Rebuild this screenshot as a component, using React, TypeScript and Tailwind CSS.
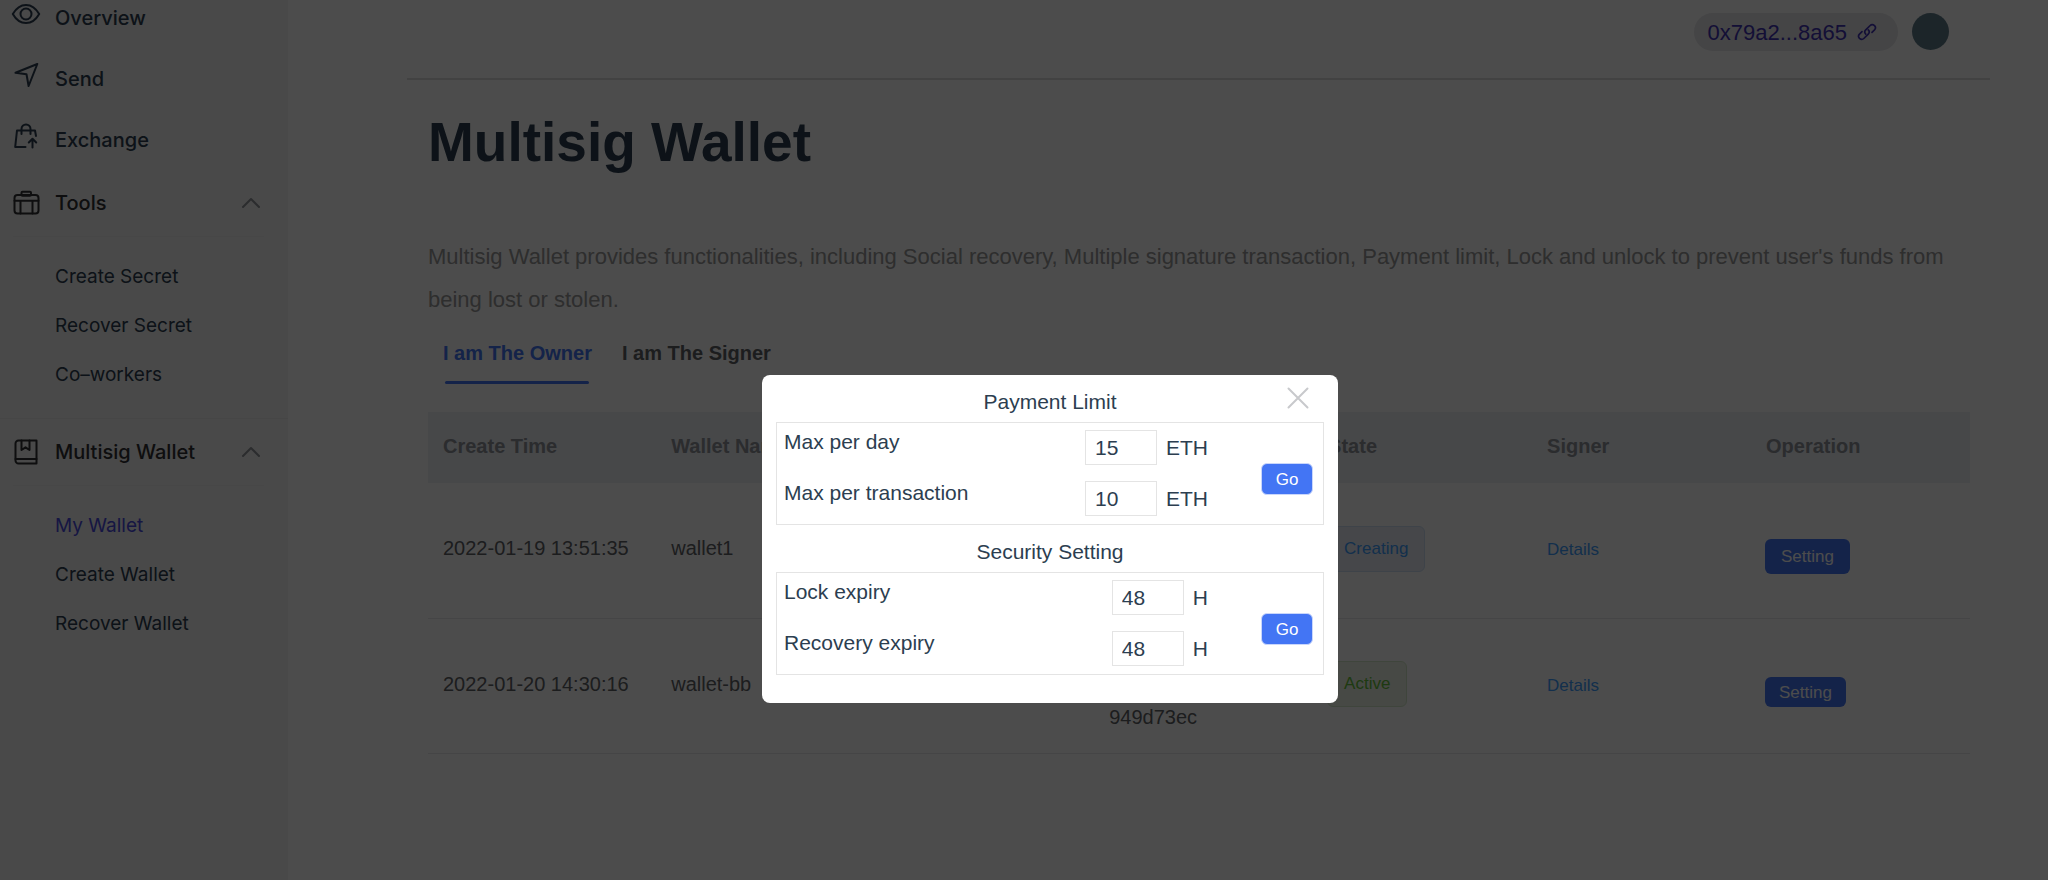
import type { ReactNode } from "react";

const line = {
  fill: "none",
  stroke: "currentColor",
  strokeWidth: 2,
  strokeLinecap: "round" as const,
  strokeLinejoin: "round" as const,
};

function EyeIcon() {
  return (
    <svg width="30" height="30" viewBox="0 0 30 30" {...line}>
      <path d="M1.800 15C5.500 8.500 9.600 5.900 15 5.900S24.500 8.500 28.200 15C24.500 21.500 20.400 24.100 15 24.100S5.500 21.500 1.800 15Z" />
      <circle cx="15" cy="15" r="5.500" />
    </svg>
  );
}

function SendIcon() {
  return (
    <svg width="30" height="30" viewBox="0 0 30 30" {...line}>
      <path d="M26.300 4L4.500 12.800L15.500 14.200L17.600 26Z" />
    </svg>
  );
}

function ExchangeIcon() {
  return (
    <svg width="30" height="30" viewBox="0 0 30 30" {...line}>
      <path d="M14.500 26H4.200L6 9.500H24L25 15" />
      <path d="M10.500 13V8a4.500 4.500 0 0 1 9 0V13" />
      <path d="M21.500 26.500V18.500M17.800 21.500L21.500 17.800L25.200 21.500" />
    </svg>
  );
}

function ToolsIcon() {
  return (
    <svg width="30" height="30" viewBox="0 0 30 30" {...line}>
      <rect x="3.500" y="7" width="24" height="18.500" rx="3" />
      <rect x="10.500" y="3.800" width="9.500" height="4" rx="1" />
      <path d="M3.500 12.800H27.500M9.500 12.800V25.500M21.500 12.800V25.500" />
    </svg>
  );
}

function BookIcon() {
  return (
    <svg width="30" height="30" viewBox="0 0 30 30" {...line}>
      <path d="M7.500 3.500H25.500V26.500H7.500a3 3 0 0 1-3-3V6.500a3 3 0 0 1 3-3Z" />
      <path d="M4.500 22H25.500M10.500 3.500V13L14.500 10.300L18.500 13V3.500" />
    </svg>
  );
}

function ChevronUp() {
  return (
    <svg width="20" height="12" viewBox="0 0 20 12" {...line} className="text-[#909399]">
      <path d="M2 10L10 2L18 10" />
    </svg>
  );
}

function LinkIcon() {
  return (
    <svg width="20" height="20" viewBox="0 0 24 24" {...line}>
      <path d="M10.500 14.500C9 13 9 11 10.500 9.500L15.500 4.500C17 3 19.500 3 21 4.300C22.400 5.800 22.400 8 21 9.500L18 12.500" />
      <path d="M13.500 9.500C15 11 15 13 13.500 14.500L8.500 19.500C7 21 4.500 21 3 19.700C1.600 18.200 1.600 16 3 14.500L6 11.500" />
    </svg>
  );
}

function NavItem({ icon, label }: { icon: ReactNode; label: string }) {
  return (
    <a href="#" className="flex h-[61px] items-center gap-[14px] pl-[11px] text-[20px] font-medium text-[#2c3e50]">
      <span className="pb-[7px]">{icon}</span>
      {label}
    </a>
  );
}

function NavGroup({ icon, label, items, active }: { icon: ReactNode; label: string; items: string[]; active?: string }) {
  return (
    <section>
      <button className="flex h-[66px] w-full items-center gap-[14px] pr-[27px] pl-[11px] text-[20px] font-medium text-[#303133]">
        {icon}
        <span className="flex-1 text-left">{label}</span>
        <ChevronUp />
      </button>
      <div className="mr-6 ml-[13px] border-t border-[#efefef]" />
      <ul className="pt-4 pb-[18px]">
        {items.map((item) => (
          <li key={item}>
            <a
              href="#"
              className={
                item === active
                  ? "flex h-[49px] items-center pl-[55px] text-[19px] text-[#4a4ae0]"
                  : "flex h-[49px] items-center pl-[55px] text-[19px] text-[#2c3e50]"
              }
            >
              {item}
            </a>
          </li>
        ))}
      </ul>
    </section>
  );
}

const wallets = [
  { time: "2022-01-19 13:51:35", name: "wallet1", address: "", state: "Creating" },
  { time: "2022-01-20 14:30:16", name: "wallet-bb", address: "949d73ec", state: "Active" },
];

function Field({ id, label, value, unit }: { id: string; label: string; value: string; unit: string }) {
  return (
    <div className="flex items-start">
      <label htmlFor={id} className="flex-1">
        {label}
      </label>
      <div className="flex items-center gap-[9px]">
        <input
          id={id}
          defaultValue={value}
          className="h-[35px] w-[72px] border border-[#e4e4e4] bg-white pl-[9px] outline-none"
        />
        <span>{unit}</span>
      </div>
    </div>
  );
}

function SettingGroup({ title, children }: { title: string; children: ReactNode }) {
  return (
    <fieldset className="flex flex-col">
      <legend className="h-[47px] w-full pt-3 text-center leading-[30px]">{title}</legend>
      <div className="flex items-center border border-[#e4e4e4] pt-[7px] pr-[10px] pb-2 pl-[7px]">
        <div className="flex flex-1 flex-col gap-4 leading-[24px]">{children}</div>
        <button className="mt-3 ml-[53px] h-8 w-[52px] rounded-md border border-[#c9d6fb] bg-[#4375f4] text-[17px] leading-none text-white">
          Go
        </button>
      </div>
    </fieldset>
  );
}

export default function App() {
  return (
    <div className="flex min-h-screen bg-white font-['Liberation_Sans',Arial,sans-serif]">
      <aside className="w-[288px] shrink-0 bg-[#f3f3f3] font-[Inter,sans-serif]">
        <nav className="-mt-[13px]">
          <NavItem icon={<EyeIcon />} label="Overview" />
          <NavItem icon={<SendIcon />} label="Send" />
          <NavItem icon={<ExchangeIcon />} label="Exchange" />
          <NavGroup icon={<ToolsIcon />} label="Tools" items={["Create Secret", "Recover Secret", "Co–workers"]} />
          <div className="border-t border-[#ececec]" />
          <NavGroup
            icon={<BookIcon />}
            label="Multisig Wallet"
            items={["My Wallet", "Create Wallet", "Recover Wallet"]}
            active="My Wallet"
          />
        </nav>
      </aside>

      <main className="min-w-0 flex-1 pr-[58px] pl-[119px]">
        <header className="flex h-20 items-start justify-end gap-[14px] border-b-2 border-[#dedede] pt-[13px] pr-[41px]">
          <a href="#" className="flex h-[38px] items-center gap-[10px] rounded-full bg-[#e6e6ea] pr-[21px] pl-[14px] text-[22px] text-[#4233b5]">
            0x79a2...8a65
            <LinkIcon />
          </a>
          <span className="h-[37px] w-[37px] rounded-full bg-[#607d8b]" />
        </header>

        <div className="pr-5 pl-[21px]">
          <h1 className="pt-[30px] text-[55px] leading-[64px] font-bold text-[#2c3e50]">Multisig Wallet</h1>
          <p className="pt-[61px] text-[22px] leading-[43px] text-[#999999]">
            Multisig Wallet provides functionalities, including Social recovery, Multiple signature transaction, Payment
            limit, Lock and unlock to prevent user's funds from being lost or stolen.
          </p>

          <div className="flex gap-[30px] pl-[15px] text-[20px] leading-[24px] font-bold">
            <button className="flex flex-col items-center gap-4 pt-5 text-[#4375f4]">
              I am The Owner
              <span className="h-[3px] w-36 rounded-full bg-[#4375f4]" />
            </button>
            <button className="self-start pt-5 text-[#606266]">I am The Signer</button>
          </div>

          <table className="mt-7 w-full table-fixed text-left text-[20px] text-[#606266]">
            <colgroup>
              <col className="w-[14.8%]" />
              <col className="w-[28.4%]" />
              <col className="w-[14.2%]" />
              <col className="w-[14.2%]" />
              <col className="w-[14.2%]" />
              <col className="w-[14.2%]" />
            </colgroup>
            <thead className="bg-[#eef1f6] text-[#909399]">
              <tr className="h-[71px]">
                {["Create Time", "Wallet Name", "", "State", "Signer", "Operation"].map((head) => (
                  <th key={head} className="px-[15px] pb-1 font-bold">
                    {head}
                  </th>
                ))}
              </tr>
            </thead>
            <tbody>
              {wallets.map((wallet) => (
                <tr key={wallet.name} className="h-[135px] border-b border-[#e6e8ec]">
                  <td className="px-[15px] pb-1">{wallet.time}</td>
                  <td className="px-[15px] pb-1">{wallet.name}</td>
                  <td className="px-[15px] pt-[62px]">{wallet.address}</td>
                  <td className="px-[14px] pb-[3px]">
                    <span
                      className={
                        wallet.state === "Active"
                          ? "inline-flex h-[46px] items-center rounded-md border border-[#d4e8c8] bg-[#edf4e8] px-[16px] text-[17px] text-[#67c23a]"
                          : "inline-flex h-[46px] items-center rounded-md border border-[#cfe0f6] bg-[#e9eff8] px-[16px] text-[17px] text-[#409eff]"
                      }
                    >
                      {wallet.state}
                    </span>
                  </td>
                  <td className="px-[15px] pb-1">
                    <a href="#" className="text-[17px] text-[#409eff]">
                      Details
                    </a>
                  </td>
                  <td className="px-[14px] pt-[12px]">
                    <button
                      className={
                        wallet.state === "Active"
                          ? "h-[30px] rounded-md bg-[#4375f4] px-[14px] text-[17px] leading-none text-white"
                          : "h-[35px] rounded-md bg-[#4375f4] px-4 text-[17px] leading-none text-white"
                      }
                    >
                      Setting
                    </button>
                  </td>
                </tr>
              ))}
            </tbody>
          </table>
        </div>
      </main>

      <div className="fixed inset-0 flex items-start justify-center bg-black/70 pt-[375px] pl-[52px]">
        <div
          role="dialog"
          aria-label="Wallet settings"
          className="relative w-[576px] rounded-lg bg-white px-[14px] pb-7 text-[21px] text-[#2c3e50]"
        >
          <button aria-label="Close" className="absolute top-[11px] right-7 text-[#c8c9cc]">
            <svg width="24" height="24" viewBox="0 0 24 24" {...line}>
              <path d="M2.500 2.500L21.500 21.500M21.500 2.500L2.500 21.500" />
            </svg>
          </button>
          <SettingGroup title="Payment Limit">
            <Field id="day" label="Max per day" value="15" unit="ETH" />
            <Field id="transaction" label="Max per transaction" value="10" unit="ETH" />
          </SettingGroup>
          <SettingGroup title="Security Setting">
            <Field id="lock" label="Lock expiry" value="48" unit="H" />
            <Field id="recovery" label="Recovery expiry" value="48" unit="H" />
          </SettingGroup>
        </div>
      </div>
    </div>
  );
}
